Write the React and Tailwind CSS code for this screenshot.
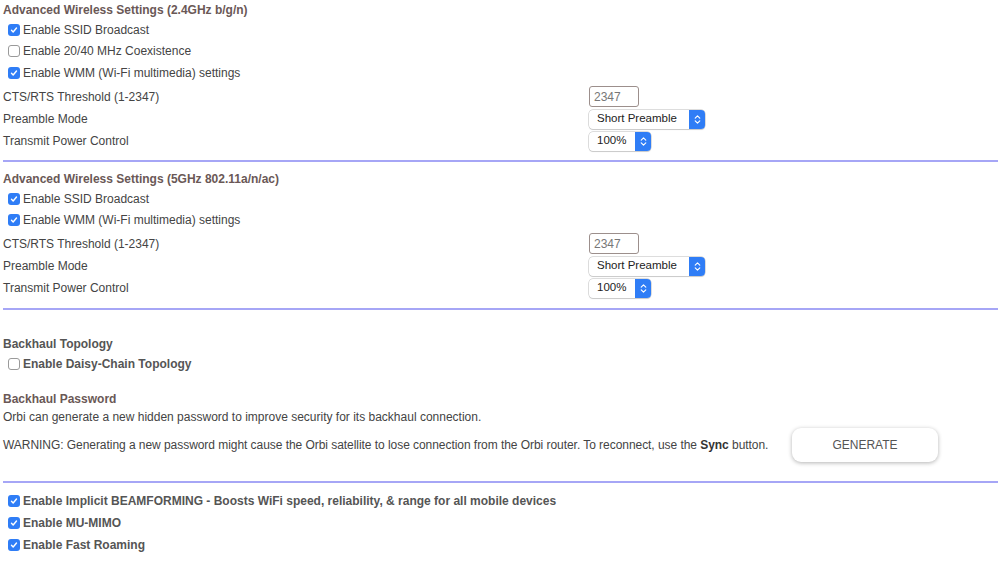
import { ChevronsUpDown } from 'lucide-react'

function Box({ checked }) {
  if (!checked) {
    return <span className="inline-block w-[12px] h-[12px] rounded-[3px] border border-[#9a9a9a] bg-white shrink-0" />
  }
  return (
    <span className="inline-flex items-center justify-center w-[12px] h-[12px] rounded-[3px] bg-[#2f7df6] shrink-0">
      <svg viewBox="0 0 12 12" className="w-[10px] h-[10px]">
        <path d="M3 6.3 L5 8.3 L9 3.6" fill="none" stroke="white" strokeWidth="1.7" strokeLinecap="round" strokeLinejoin="round" />
      </svg>
    </span>
  )
}

function Check({ checked, label, bold, h = 'h-[21px]' }) {
  return (
    <div className={`flex items-center gap-[3px] pl-[8px] ${h} ${bold ? 'font-bold text-[#555]' : 'text-[#444]'}`}>
      <Box checked={checked} />
      <span>{label}</span>
    </div>
  )
}

function Select({ value, w }) {
  return (
    <div className={`flex items-center h-[19px] rounded-[4px] bg-white shadow-[0_0_0_0.5px_#bbb,0_1px_1px_rgba(0,0,0,0.15)] overflow-hidden ${w}`}>
      <span className="flex-1 pl-[8px] text-[#222] text-[11.5px]">{value}</span>
      <span className="flex items-center justify-center w-[16px] h-full bg-[#2f7df6]">
        <ChevronsUpDown className="w-[11px] h-[11px] text-white" strokeWidth={2.5} />
      </span>
    </div>
  )
}

function Row({ label, children, h = 'h-[22px]' }) {
  return (
    <div className={`flex items-center ${h} text-[#444]`}>
      <span className="w-[586px]">{label}</span>
      {children}
    </div>
  )
}

function Divider({ className = '' }) {
  return <div className={`h-[2px] bg-[#a6a6f6] ml-[3px] ${className}`} />
}

function Heading({ children, className = '' }) {
  return <div className={`font-bold text-[#6a5856] h-[19px] flex items-center ${className}`}>{children}</div>
}

function Wireless({ title, twentyForty }) {
  return (
    <div>
      <div className="pl-[3px]">
        <Heading>{title}</Heading>
      </div>
      <Check checked label="Enable SSID Broadcast" />
      {twentyForty && <Check label="Enable 20/40 MHz Coexistence" h="h-[22px]" />}
      <Check checked label="Enable WMM (Wi-Fi multimedia) settings" h="h-[22px]" />
      <div className="pl-[3px] mt-[1px]">
        <Row label="CTS/RTS Threshold (1-2347)" h="h-[23px]">
          <div className="w-[50px] h-[21px] border border-[#9c8f8c] rounded-[3px] flex items-center pl-[4px] text-[#777]">2347</div>
        </Row>
        <Row label="Preamble Mode">
          <Select value="Short Preamble" w="w-[116px]" />
        </Row>
        <Row label="Transmit Power Control">
          <Select value="100%" w="w-[62px]" />
        </Row>
      </div>
    </div>
  )
}

export default function App() {
  return (
    <div className="w-[998px] h-[561px] bg-white text-[12px] overflow-hidden" style={{ fontFamily: '"Liberation Sans", Arial, sans-serif' }}>
      <Wireless title="Advanced Wireless Settings (2.4GHz b/g/n)" twentyForty />
      <Divider className="mt-[8px]" />
      <div className="mt-[7px]">
        <Wireless title="Advanced Wireless Settings (5GHz 802.11a/n/ac)" />
      </div>
      <Divider className="mt-[9px]" />

      <div className="pl-[3px] mt-[24px]">
        <div className="font-bold text-[#555] h-[19px] flex items-center">Backhaul Topology</div>
      </div>
      <Check label="Enable Daisy-Chain Topology" bold h="h-[22px]" />
      <div className="pl-[3px] mt-[14px]">
        <Heading>Backhaul Password</Heading>
        <div className="h-[18px] flex items-center text-[#444]">Orbi can generate a new hidden password to improve security for its backhaul connection.</div>
        <div className="flex items-center mt-[2px] text-[#444]">
          <span className="w-[789px] tracking-[-0.05px]">
            WARNING: Generating a new password might cause the Orbi satellite to lose connection from the Orbi router. To reconnect, use the <b className="text-[#333]">Sync</b> button.
          </span>
          <button className="w-[146px] h-[34px] rounded-[9px] bg-white text-[#555] shadow-[0_1px_4px_rgba(0,0,0,0.3)] text-[12px]">GENERATE</button>
        </div>
      </div>
      <Divider className="mt-[19px]" />
      <div className="mt-[7px]">
        <Check checked bold label="Enable Implicit BEAMFORMING - Boosts WiFi speed, reliability, & range for all mobile devices" h="h-[22px]" />
        <Check checked bold label="Enable MU-MIMO" h="h-[22px]" />
        <Check checked bold label="Enable Fast Roaming" h="h-[22px]" />
      </div>
    </div>
  )
}
